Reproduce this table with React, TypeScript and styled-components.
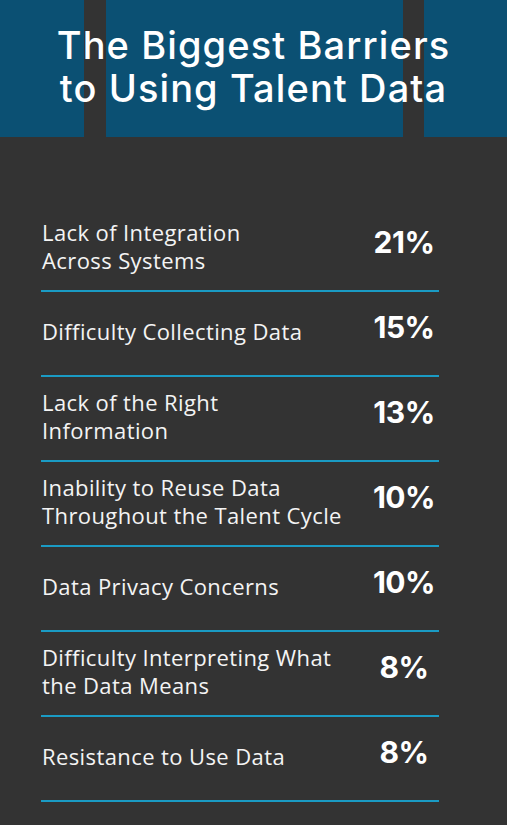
import React from 'react';
import styled, { createGlobalStyle } from 'styled-components';

const GlobalStyle = createGlobalStyle`
  html, body {
    margin: 0;
    padding: 0;
    background: #333333;
  }
`;

const Page = styled.div`
  width: 507px;
  min-height: 825px;
  background: #333333;
  color: #ffffff;
  overflow: hidden;
`;

const Banner = styled.header`
  height: 137px;
  box-sizing: border-box;
  padding-top: 24px;
  background: linear-gradient(
    to right,
    #0b5073 0 84px,
    #333333 84px 106px,
    #0b5073 106px 403px,
    #333333 403px 424px,
    #0b5073 424px
  );
`;

const Title = styled.h1`
  margin: 0;
  font-family: Inter, 'Open Sans', sans-serif;
  font-weight: 500;
  font-size: 38px;
  line-height: 43px;
  text-align: center;
  letter-spacing: 1.1px;
  white-space: nowrap;
`;

const List = styled.ul`
  list-style: none;
  margin: 70px 0 0 41px;
  padding: 0;
  width: 398px;
`;

const Row = styled.li`
  display: flex;
  align-items: center;
  height: 85px;
  box-sizing: border-box;
  padding-bottom: 5px;
  border-bottom: 2px solid #1a9bc4;
`;

const Label = styled.span`
  flex: 1;
  padding-left: 1px;
  font-family: 'Open Sans', 'Noto Sans', sans-serif;
  font-size: 22px;
  line-height: 28px;
  letter-spacing: 0.4px;
  color: #f4f4f4;
  white-space: nowrap;
`;

const Percent = styled.span`
  width: 70px;
  margin-bottom: 9px;
  text-align: center;
  font-family: Inter, 'Open Sans', sans-serif;
  font-weight: 700;
  font-size: 30px;
  line-height: 36px;
  letter-spacing: -0.5px;
`;

const barriers = [
  { label: ['Lack of Integration', 'Across Systems'], value: '21%' },
  { label: ['Difficulty Collecting Data'], value: '15%' },
  { label: ['Lack of the Right', 'Information'], value: '13%' },
  { label: ['Inability to Reuse Data', 'Throughout the Talent Cycle'], value: '10%' },
  { label: ['Data Privacy Concerns'], value: '10%' },
  { label: ['Difficulty Interpreting What', 'the Data Means'], value: '8%' },
  { label: ['Resistance to Use Data'], value: '8%' },
];

const App: React.FC = () => {
  return (
    <Page>
      <GlobalStyle />
      <Banner>
        <Title>
          The Biggest Barriers
          <br />
          to Using Talent Data
        </Title>
      </Banner>
      <List>
        {barriers.map((b, i) => (
          <Row key={i}>
            <Label>
              {b.label.map((line, j) => (
                <React.Fragment key={j}>
                  {j > 0 && <br />}
                  {line}
                </React.Fragment>
              ))}
            </Label>
            <Percent>{b.value}</Percent>
          </Row>
        ))}
      </List>
    </Page>
  );
};

export default App;
